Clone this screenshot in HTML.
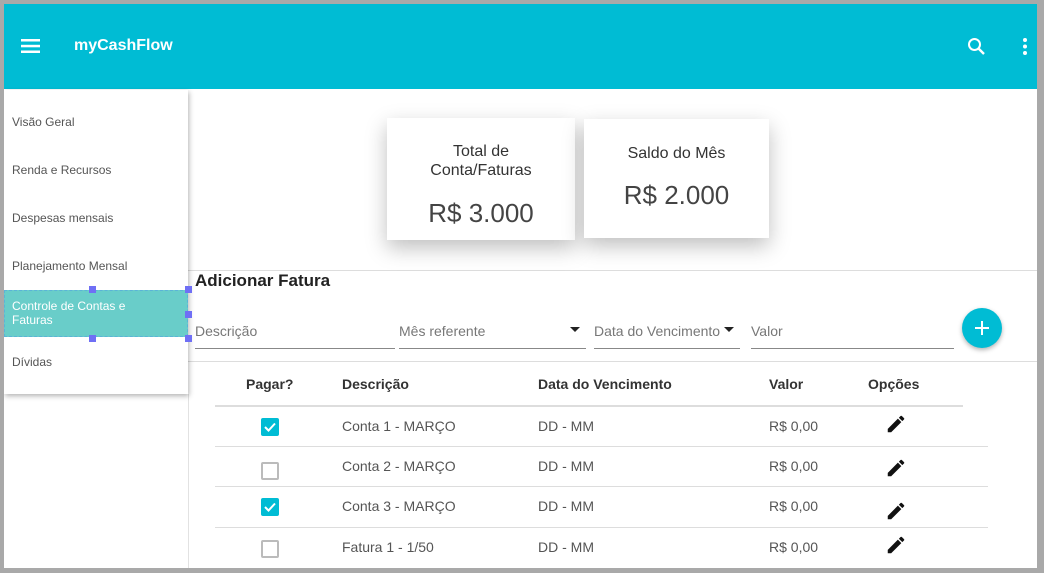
<!DOCTYPE html>
<html><head><meta charset="utf-8"><style>
*{margin:0;padding:0;box-sizing:border-box}
body{width:1044px;height:573px;background:#a9a9a9;font-family:"Liberation Sans",Arial,sans-serif;position:relative;overflow:hidden}
#page{position:absolute;left:4px;top:4px;width:1033px;height:564px;background:#fff;overflow:hidden}
.a{position:absolute}
#hdr{left:0;top:0;width:1033px;height:85px;background:#00bcd4}
.nav{font-size:12px;color:#555;left:8px}
.card{background:#fff;box-shadow:0 8px 20px rgba(0,0,0,.25);text-align:center;color:#333}
.ph{font-size:14px;color:#777;line-height:16px}
.ul{height:1px;background:#888}
.th{font-size:14px;font-weight:bold;color:#333;top:372px}
.td{font-size:14px;color:#555}
.hl{height:1px;background:#ddd}
.cb{width:18px;height:18px;border-radius:2px}
.on{background:#00bcd4}
.off{border:2px solid #bbb}
</style></head><body>
<div id="page">
<div id="hdr" class="a">
 <svg class="a" style="left:17px;top:35px" width="20" height="14"><rect y="0" width="19" height="2.5" fill="#fff"/><rect y="5.8" width="19" height="2.5" fill="#fff"/><rect y="11.5" width="19" height="2.5" fill="#fff"/></svg>
 <div class="a" style="left:70px;top:33px;color:#fff;font-size:16px;font-weight:bold">myCashFlow</div>
 <svg class="a" style="left:961px;top:31px" width="24" height="24" viewBox="0 0 24 24"><circle cx="9.5" cy="9.5" r="5.5" stroke="#fff" stroke-width="2" fill="none"/><line x1="13.5" y1="13.5" x2="19" y2="19" stroke="#fff" stroke-width="2.4"/></svg>
 <svg class="a" style="left:1018px;top:33px" width="6" height="20"><circle cx="3" cy="3" r="2" fill="#fff"/><circle cx="3" cy="9.5" r="2" fill="#fff"/><circle cx="3" cy="16" r="2" fill="#fff"/></svg>
</div>
<div class="a" style="left:184px;top:390px;width:1px;height:180px;background:#e2e2e2"></div>
<div class="a hl" style="left:184px;top:266px;width:850px"></div>
<div class="a hl" style="left:184px;top:357px;width:850px"></div>
<div class="a" style="left:0;top:86px;width:184px;height:304px;background:#fff;box-shadow:1px 2px 5px rgba(0,0,0,.3)">
 <div class="a nav" style="top:25px">Visão Geral</div>
 <div class="a nav" style="top:73px">Renda e Recursos</div>
 <div class="a nav" style="top:121px">Despesas mensais</div>
 <div class="a nav" style="top:169px">Planejamento Mensal</div>
 <div class="a" style="left:0;top:200px;width:184px;height:47px;background:#69cdc9;border:1px dashed #5bb3d8"></div>
 <div class="a nav" style="top:209px;color:#fff;line-height:14px;font-weight:500">Controle de Contas e<br>Faturas</div>
 <div class="a nav" style="top:265px">Dívidas</div>
 <div class="a" style="left:85px;top:196px;width:7px;height:7px;background:#6f6ff5"></div>
 <div class="a" style="left:181px;top:196px;width:7px;height:7px;background:#6f6ff5"></div>
 <div class="a" style="left:181px;top:221px;width:7px;height:7px;background:#6f6ff5"></div>
 <div class="a" style="left:85px;top:245px;width:7px;height:7px;background:#6f6ff5"></div>
 <div class="a" style="left:181px;top:245px;width:7px;height:7px;background:#6f6ff5"></div>
</div>
<div class="a card" style="left:383px;top:114px;width:188px;height:122px">
 <div style="margin-top:24px;font-size:16px;line-height:19px">Total de<br>Conta/Faturas</div>
 <div style="margin-top:18px;font-size:26px;color:#444">R$ 3.000</div>
</div>
<div class="a card" style="left:580px;top:115px;width:185px;height:119px">
 <div style="margin-top:26px;font-size:16px">Saldo do Mês</div>
 <div style="margin-top:17px;font-size:26px;color:#444">R$ 2.000</div>
</div>
<div class="a" style="left:191px;top:267px;font-size:17px;font-weight:bold;color:#222">Adicionar Fatura</div>
<div class="a ph" style="left:191px;top:319px">Descrição</div><div class="a ul" style="left:191px;top:344px;width:200px"></div>
<div class="a ph" style="left:395px;top:319px">Mês referente</div><div class="a ul" style="left:395px;top:344px;width:187px"></div>
<svg class="a" style="left:566px;top:323px" width="10" height="6"><path d="M0 0H10L5 5Z" fill="#222"/></svg>
<div class="a ph" style="left:590px;top:319px">Data do Vencimento</div><div class="a ul" style="left:590px;top:344px;width:146px"></div>
<svg class="a" style="left:720px;top:323px" width="10" height="6"><path d="M0 0H10L5 5Z" fill="#222"/></svg>
<div class="a ph" style="left:747px;top:319px">Valor</div><div class="a ul" style="left:747px;top:344px;width:203px"></div>
<div class="a" style="left:958px;top:304px;width:40px;height:40px;border-radius:50%;background:#00bcd4;box-shadow:0 2px 5px rgba(0,0,0,.3)"><svg width="40" height="40"><path d="M20 13V27M13 20H27" stroke="#fff" stroke-width="2"/></svg></div>
<div class="a th" style="left:242px">Pagar?</div>
<div class="a th" style="left:338px">Descrição</div>
<div class="a th" style="left:534px">Data do Vencimento</div>
<div class="a th" style="left:765px">Valor</div>
<div class="a th" style="left:864px">Opções</div>
<div class="a" style="left:211px;top:401px;width:748px;height:2px;background:#ddd"></div>
<div class="a hl" style="left:211px;top:442px;width:773px"></div>
<div class="a hl" style="left:211px;top:482px;width:773px"></div>
<div class="a hl" style="left:211px;top:523px;width:773px"></div>

<div class="a cb on" style="left:257px;top:414px"><svg width="18" height="18"><path d="M4 9L7.5 12.5L14 5.5" stroke="#fff" stroke-width="2" fill="none"/></svg></div>
<div class="a cb off" style="left:257px;top:458px"></div>
<div class="a cb on" style="left:257px;top:494px"><svg width="18" height="18"><path d="M4 9L7.5 12.5L14 5.5" stroke="#fff" stroke-width="2" fill="none"/></svg></div>
<div class="a cb off" style="left:257px;top:536px"></div>

<div class="a td" style="left:338px;top:414px">Conta 1 - MARÇO</div>
<div class="a td" style="left:338px;top:454px">Conta 2 - MARÇO</div>
<div class="a td" style="left:338px;top:494px">Conta 3 - MARÇO</div>
<div class="a td" style="left:338px;top:535px">Fatura 1 - 1/50</div>
<div class="a td" style="left:534px;top:414px">DD - MM</div>
<div class="a td" style="left:534px;top:454px">DD - MM</div>
<div class="a td" style="left:534px;top:494px">DD - MM</div>
<div class="a td" style="left:534px;top:535px">DD - MM</div>
<div class="a td" style="left:765px;top:414px">R$ 0,00</div>
<div class="a td" style="left:765px;top:454px">R$ 0,00</div>
<div class="a td" style="left:765px;top:494px">R$ 0,00</div>
<div class="a td" style="left:765px;top:535px">R$ 0,00</div>
<svg class="a" style="left:881px;top:409px" width="22" height="22" viewBox="0 0 24 24"><path d="M3 17.25V21h3.75L17.81 9.94l-3.75-3.75L3 17.25zM20.71 7.04a1 1 0 000-1.41l-2.34-2.34a1 1 0 00-1.41 0l-1.83 1.83 3.75 3.750 1.83-1.83z" fill="#111"/></svg>
<svg class="a" style="left:881px;top:453px" width="22" height="22" viewBox="0 0 24 24"><path d="M3 17.25V21h3.75L17.81 9.94l-3.75-3.75L3 17.25zM20.71 7.04a1 1 0 000-1.41l-2.34-2.34a1 1 0 00-1.41 0l-1.83 1.83 3.75 3.75 1.83-1.83z" fill="#111"/></svg>
<svg class="a" style="left:881px;top:496px" width="22" height="22" viewBox="0 0 24 24"><path d="M3 17.25V21h3.75L17.81 9.94l-3.75-3.75L3 17.25zM20.71 7.04a1 1 0 000-1.41l-2.34-2.34a1 1 0 00-1.41 0l-1.83 1.83 3.75 3.75 1.83-1.83z" fill="#111"/></svg>
<svg class="a" style="left:881px;top:530px" width="22" height="22" viewBox="0 0 24 24"><path d="M3 17.25V21h3.75L17.81 9.94l-3.75-3.75L3 17.25zM20.71 7.04a1 1 0 000-1.41l-2.34-2.34a1 1 0 00-1.41 0l-1.83 1.83 3.75 3.75 1.83-1.83z" fill="#111"/></svg>
</div>
</body></html>
